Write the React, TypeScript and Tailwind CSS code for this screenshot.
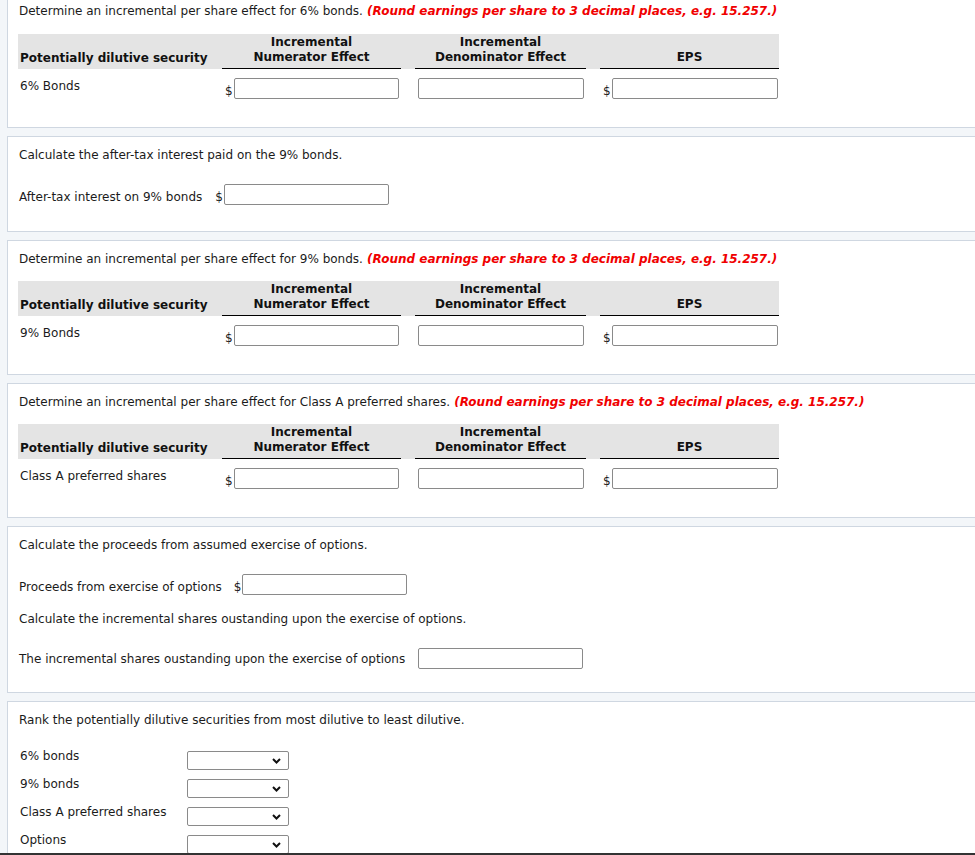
import React from "react"

const font = { fontFamily: '"DejaVu Sans", Verdana, sans-serif' }

function Panel({ children, className = "" }: { children: React.ReactNode; className?: string }) {
  return (
    <div className={"bg-white border border-r-0 border-[#cfd7e1] pl-[11px] " + className}>{children}</div>
  )
}

function Box({ className = "" }: { className?: string }) {
  return <div className={"h-[21px] w-[165px] border border-[#8a8a8a] rounded-[2px] bg-white " + className} />
}

function Dollar() {
  return <span className="self-end text-[12px] leading-[15px] text-[#1a1a1a] mr-[1px]">$</span>
}

function Note({ text, red }: { text: string; red?: string }) {
  return (
    <p className="text-[12px] leading-[16px] text-[#1b1b1b]">
      {text}
      {red && <span className="font-bold italic text-[#f00000]"> {red}</span>}
    </p>
  )
}

const ROUND = "(Round earnings per share to 3 decimal places, e.g. 15.257.)"

function EffectTable({ label }: { label: string }) {
  return (
    <div className="ml-[-1px] w-[761px]">
      <div className="grid grid-cols-[204px_179px_14px_171px_14px_179px] bg-[#e4e4e4] h-[35px] text-[12px] leading-[15px] font-bold text-[#111]">
        <div className="flex items-end pl-[2px] pb-[3px]">Potentially dilutive security</div>
        <div className="flex items-end justify-center text-center border-b border-black pb-[3px]">
          Incremental
          <br />
          Numerator Effect
        </div>
        <div />
        <div className="flex items-end justify-center text-center border-b border-black pb-[3px]">
          Incremental
          <br />
          Denominator Effect
        </div>
        <div />
        <div className="flex items-end justify-center text-center border-b border-black pb-[3px]">EPS</div>
      </div>
      <div className="grid grid-cols-[204px_179px_14px_171px_14px_179px] mt-[9px] text-[12px] leading-[16px] text-[#1b1b1b]">
        <div className="pl-[2px]">{label}</div>
        <div className="flex pl-[3px]">
          <Dollar />
          <Box className="w-[165px]" />
        </div>
        <div />
        <div className="flex pl-[3px]">
          <Box className="w-[166px]" />
        </div>
        <div />
        <div className="flex pl-[3px]">
          <Dollar />
          <Box className="w-[166px]" />
        </div>
      </div>
    </div>
  )
}

function Select() {
  return (
    <div className="h-[19px] w-[102px] border border-[#8a8a8a] rounded-[2px] bg-white flex items-center justify-end pr-[7px]">
      <svg width="9" height="6" viewBox="0 0 9 6">
        <path d="M1 1 L4.5 4.5 L8 1" fill="none" stroke="#111" strokeWidth="2" />
      </svg>
    </div>
  )
}

export default function App() {
  const ranks = ["6% bonds", "9% bonds", "Class A preferred shares", "Options"]
  return (
    <div style={font} className="min-h-screen bg-[#f3f6f9] pl-[7px] flex flex-col gap-[8px] overflow-hidden">
      <Panel className="border-t-0 pt-[3px] pb-[28px]">
        <Note text="Determine an incremental per share effect for 6% bonds." red={ROUND} />
        <div className="mt-[15px]">
          <EffectTable label="6% Bonds" />
        </div>
      </Panel>

      <Panel className="pt-[10px] pb-[26px]">
        <Note text="Calculate the after-tax interest paid on the 9% bonds." />
        <div className="flex items-end mt-[21px] text-[12px] leading-[16px] text-[#1b1b1b]">
          <span className="mr-[13px]">After-tax interest on 9% bonds</span>
          <Dollar />
          <Box />
        </div>
      </Panel>

      <Panel className="pt-[10px] pb-[28px]">
        <Note text="Determine an incremental per share effect for 9% bonds." red={ROUND} />
        <div className="mt-[14px]">
          <EffectTable label="9% Bonds" />
        </div>
      </Panel>

      <Panel className="pt-[10px] pb-[28px]">
        <Note text="Determine an incremental per share effect for Class A preferred shares." red={ROUND} />
        <div className="mt-[14px]">
          <EffectTable label="Class A preferred shares" />
        </div>
      </Panel>

      <Panel className="pt-[10px] pb-[23px]">
        <Note text="Calculate the proceeds from assumed exercise of options." />
        <div className="flex items-end mt-[21px] text-[12px] leading-[16px] text-[#1b1b1b]">
          <span className="mr-[12px]">Proceeds from exercise of options</span>
          <Dollar />
          <Box />
        </div>
        <div className="mt-[16px]">
          <Note text="Calculate the incremental shares oustanding upon the exercise of options." />
        </div>
        <div className="flex items-center mt-[21px] text-[12px] leading-[16px] text-[#1b1b1b]">
          <span className="mr-[13px]">The incremental shares oustanding upon the exercise of options</span>
          <Box />
        </div>
      </Panel>

      <Panel className="pt-[10px] pb-[30px]">
        <Note text="Rank the potentially dilutive securities from most dilutive to least dilutive." />
        <div className="mt-[19px] flex flex-col">
          {ranks.map((r) => (
            <div key={r} className="flex h-[28px] text-[12px] leading-[16px] text-[#1b1b1b]">
              <div className="w-[168px] pl-[1px] pt-[1px]">{r}</div>
              <div className="pt-[4px]">
                <Select />
              </div>
            </div>
          ))}
        </div>
      </Panel>

      <div className="fixed left-0 right-0 bottom-0 h-[2px] bg-[#333]" />
    </div>
  )
}
